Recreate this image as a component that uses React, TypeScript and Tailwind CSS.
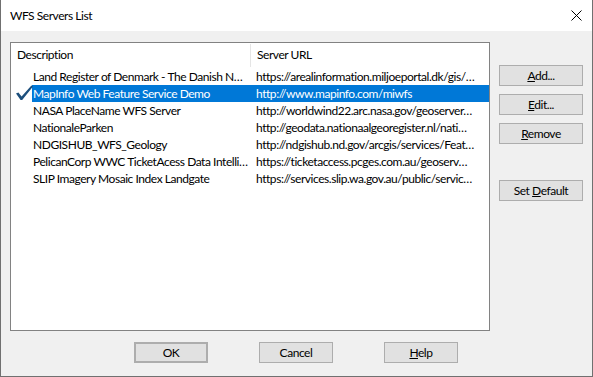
import React from "react";

const rows = [
  ["Land Register of Denmark - The Danish N…", "https://arealinformation.miljoeportal.dk/gis/…"],
  ["MapInfo Web Feature Service Demo", "http://www.mapinfo.com/miwfs"],
  ["NASA PlaceName WFS Server", "http://worldwind22.arc.nasa.gov/geoserver…"],
  ["NationaleParken", "http://geodata.nationaalgeoregister.nl/nati…"],
  ["NDGISHUB_WFS_Geology", "http://ndgishub.nd.gov/arcgis/services/Feat…"],
  ["PelicanCorp WWC TicketAcess Data Intelli…", "https://ticketaccess.pcges.com.au/geoserv…"],
  ["SLIP Imagery Mosaic Index Landgate", "https://services.slip.wa.gov.au/public/servic…"],
];

function Btn({ children, className = "" }: { children: React.ReactNode; className?: string }) {
  return (
    <div
      className={
        "flex items-center justify-center bg-[#e1e1e1] border border-[#adadad] text-[12px] text-black " +
        className
      }
    >
      {children}
    </div>
  );
}

export default function App() {
  return (
    <div
      className="w-[593px] h-[377px] flex flex-col bg-[#f0f0f0] border-x border-b border-[#707070] overflow-hidden tracking-[-0.45px]"
      style={{ fontFamily: '"Lato", "Liberation Sans", sans-serif' }}
    >
      <div className="h-[31px] shrink-0 bg-white flex items-center justify-between pl-[9px] pr-[9px]">
        <span className="text-[12px] text-black leading-none">WFS Servers List</span>
        <svg width="11" height="11" viewBox="0 0 11 11" className="mr-[1px]">
          <path d="M0.5 0.5 L10.5 10.5 M10.5 0.5 L0.5 10.5" stroke="#000" strokeWidth="1" />
        </svg>
      </div>
      <div className="flex pl-[9px] pt-[11px]">
        <div className="w-[480px] h-[289px] bg-white border border-[#828282] flex flex-col">
          <div className="h-[24px] flex items-center text-[12px] text-black shrink-0">
            <div className="w-[239px] pl-[6px]">Description</div>
            <div className="w-px h-[23px] bg-[#e5e5e5]" />
            <div className="pl-[6px]">Server URL</div>
          </div>
          <div className="mt-[1px] flex flex-col">
            {rows.map((r, i) => {
              const sel = i === 1;
              return (
                <div key={i} className="h-[17px] flex items-center text-[12px] relative">
                  <div className="w-[21px] h-[17px] shrink-0 relative">
                    {sel && (
                      <svg width="17" height="16" viewBox="0 0 17 16" className="absolute left-[5px] top-[0px]">
                        <path
                          d="M0 8.6 L2.4 7.4 L5.6 11.6 L15.4 0.4 L17 1.6 L6.2 15 L4.6 15 Z"
                          fill="#1d4f7c"
                        />
                      </svg>
                    )}
                  </div>
                  <div
                    className={
                      "flex h-[17px] items-center flex-1 " +
                      (sel ? "bg-[#0078d7] text-white" : "text-black")
                    }
                  >
                    <div className="w-[217px] shrink-0 pl-[1px] whitespace-nowrap">{r[0]}</div>
                    <div className="pl-[7px] whitespace-nowrap">{r[1]}</div>
                  </div>
                </div>
              );
            })}
          </div>
        </div>
        <div className="ml-[9px] mt-[23px] flex flex-col gap-[8px] w-[84px]">
          <Btn className="h-[21px]">
            <span><u>A</u>dd...</span>
          </Btn>
          <Btn className="h-[21px]">
            <span><u>E</u>dit...</span>
          </Btn>
          <Btn className="h-[21px]">
            <span><u>R</u>emove</span>
          </Btn>
          <Btn className="h-[21px] mt-[28px]">
            <span>Set <u>D</u>efault</span>
          </Btn>
        </div>
      </div>
      <div className="flex justify-center gap-[51px] mt-[11px] pr-[1px]">
        <Btn className="w-[74px] h-[21px] border-2 border-[#0078d7]">OK</Btn>
        <Btn className="w-[74px] h-[21px]">Cancel</Btn>
        <Btn className="w-[74px] h-[21px]">
          <span><u>H</u>elp</span>
        </Btn>
      </div>
    </div>
  );
}
